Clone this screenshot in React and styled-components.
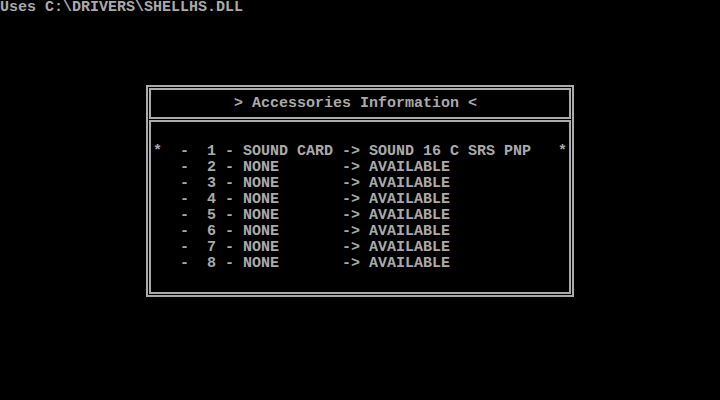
import React from "react";
import styled, { createGlobalStyle } from "styled-components";

const Global = createGlobalStyle`
  html, body { margin: 0; padding: 0; background: #000; }
  body { font-family: "Liberation Mono", "DejaVu Sans Mono", monospace; }
`;

const Screen = styled.div`
  width: 720px;
  height: 400px;
  background: #000;
  color: #aaaaaa;
  font-family: "Liberation Mono", "DejaVu Sans Mono", monospace;
  font-size: 15px;
  font-weight: bold;
  line-height: 16px;
  overflow: hidden;
`;

const StatusLine = styled.div`
  height: 16px;
  white-space: pre;
`;

const Frame = styled.div`
  box-sizing: border-box;
  margin: 69px 0 0 146px;
  width: 428px;
  height: 212px;
  border: 2px solid #aaaaaa;
  padding: 1px;
  display: flex;
  flex-direction: column;
  gap: 1px;
`;

const TitleBox = styled.div`
  box-sizing: border-box;
  height: 31px;
  border: 2px solid #aaaaaa;
  padding: 6px 0 0 83px;
  white-space: pre;
`;

const ListBox = styled.div`
  box-sizing: border-box;
  height: 174px;
  border: 2px solid #aaaaaa;
  padding: 22px 0 0 2px;
  display: flex;
  flex-direction: column;
`;

const Row = styled.div`
  display: grid;
  grid-template-columns: 27px 27px 18px 18px 99px 27px 189px 9px;
  height: 16px;
  white-space: pre;
`;

const Cell = styled.span`
  visibility: ${(p) => (p.$hidden ? "hidden" : "visible")};
`;

const items = [
  { n: 1, device: "SOUND CARD", value: "SOUND 16 C SRS PNP", selected: true },
  { n: 2, device: "NONE", value: "AVAILABLE" },
  { n: 3, device: "NONE", value: "AVAILABLE" },
  { n: 4, device: "NONE", value: "AVAILABLE" },
  { n: 5, device: "NONE", value: "AVAILABLE" },
  { n: 6, device: "NONE", value: "AVAILABLE" },
  { n: 7, device: "NONE", value: "AVAILABLE" },
  { n: 8, device: "NONE", value: "AVAILABLE" },
];

export default function App() {
  return (
    <>
      <Global />
      <Screen>
        <StatusLine>Uses C:\DRIVERS\SHELLHS.DLL</StatusLine>
        <Frame>
          <TitleBox>&gt; Accessories Information &lt;</TitleBox>
          <ListBox>
            {items.map((it) => (
              <Row key={it.n}>
                <Cell $hidden={!it.selected}>*</Cell>
                <Cell>-</Cell>
                <Cell>{it.n}</Cell>
                <Cell>-</Cell>
                <Cell>{it.device}</Cell>
                <Cell>-&gt;</Cell>
                <Cell>{it.value}</Cell>
                <Cell $hidden={!it.selected}>*</Cell>
              </Row>
            ))}
          </ListBox>
        </Frame>
      </Screen>
    </>
  );
}
